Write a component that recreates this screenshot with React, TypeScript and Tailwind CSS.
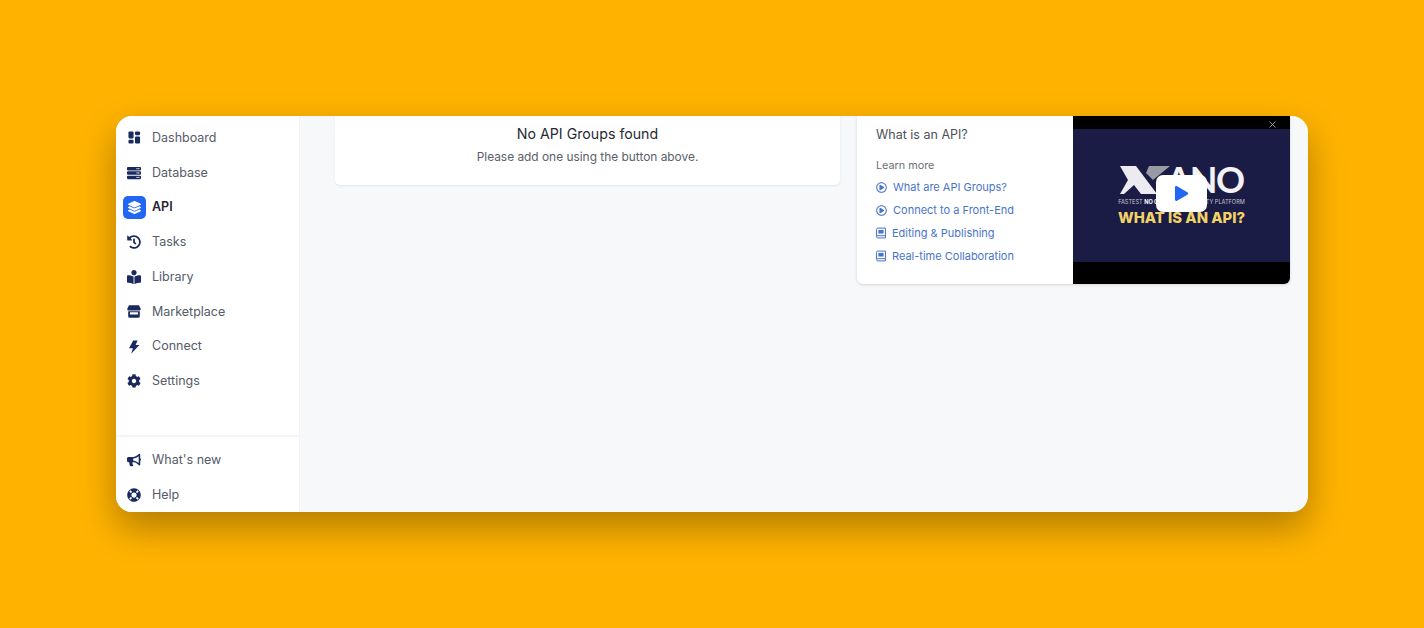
import React from "react";
import { FaServer, FaLayerGroup, FaHistory, FaBookReader, FaCog, FaBullhorn, FaRegPlayCircle, FaPlay, FaLifeRing } from "react-icons/fa";
import { X } from "lucide-react";

function DashIcon() {
  return (
    <svg viewBox="0 0 14 14" className="w-[13px] h-[13px] -mt-[1px]" fill="#1b2a5e">
      <rect x="0.5" y="0.5" width="5.5" height="7.5" rx="1.2" />
      <rect x="0.5" y="9.5" width="5.5" height="4" rx="1.2" />
      <rect x="7.5" y="0.5" width="5.5" height="4" rx="1.2" />
      <rect x="7.5" y="6" width="5.5" height="7.5" rx="1.2" />
    </svg>
  );
}

function BoltIcon() {
  return (
    <svg viewBox="0 0 12 14" className="w-[12px] h-[14px]" fill="#1b2a5e">
      <path d="M5.2 0.4 L9.6 0.4 L7.6 4.9 L11.4 4.9 L3.2 13.8 L4.9 8.2 L1 8.2 Z" />
    </svg>
  );
}

function StoreIcon() {
  return (
    <svg viewBox="0 0 14 13" className="w-[14px] h-[13px] -mt-[1px]" fill="#1b2a5e">
      <path d="M2 0.3 H12 L13.8 4 A1.6 1.6 0 0 1 12.2 5.6 H1.8 A1.6 1.6 0 0 1 0.2 4 Z" />
      <path fillRule="evenodd" d="M1.2 6.2 H12.8 V11.2 A1.6 1.6 0 0 1 11.2 12.8 H2.8 A1.6 1.6 0 0 1 1.2 11.2 Z M3 7.2 V9.6 H11 V7.2 Z" />
    </svg>
  );
}

function BookIcon() {
  return (
    <svg viewBox="0 0 11 12" className="w-[10px] h-[12px] -mt-[1px]" fill="none">
      <path d="M2 0.6 H10.4 V11.4 H2 A1.4 1.4 0 0 1 0.6 10 V2 A1.4 1.4 0 0 1 2 0.6 Z" stroke="currentColor" strokeWidth="1.1" />
      <rect x="2.6" y="2.6" width="5.8" height="4" fill="currentColor" />
      <rect x="0.8" y="8.4" width="9.4" height="1.1" fill="currentColor" />
    </svg>
  );
}

function Item({ icon, label, active }: { icon: React.ReactNode; label: string; active?: boolean }) {
  return (
    <div className="h-[34.75px] flex items-center">
      <div className="w-[36px] flex justify-center text-[#1b2a5e]">
        {active ? (
          <div className="w-[23px] h-[23px] rounded-[5px] bg-[#2167f3] text-white flex items-center justify-center">{icon}</div>
        ) : (
          <div className="flex items-center justify-center">{icon}</div>
        )}
      </div>
      <span className={active ? "text-[12.5px] font-semibold text-[#1f2430]" : "text-[12.5px] text-[#565b68]"}>{label}</span>
    </div>
  );
}

function LinkRow({ icon, label, gap }: { icon: React.ReactNode; label: string; gap: string }) {
  return (
    <div className={`h-[23px] flex items-center text-[#4a74c9] ${gap}`}>
      {icon}
      <span className="text-[11px]">{label}</span>
    </div>
  );
}

export default function App() {
  const font = { fontFamily: "Inter, 'Liberation Sans', sans-serif" };
  return (
    <div className="w-[1424px] h-[628px] bg-[#ffb300] pt-[116px] pl-[116px] overflow-hidden" style={font}>
      <div className="w-[1192px] h-[396px] rounded-[16px] overflow-hidden flex bg-[#f7f8fa] shadow-[0_16px_36px_rgba(0,0,0,0.3)]">
        <aside className="w-[184px] h-full bg-white border-r border-[#f1f2f5] flex flex-col">
          <nav className="pt-[4.8px] flex-1">
            <Item icon={<DashIcon />} label="Dashboard" />
            <Item icon={<FaServer size={14} />} label="Database" />
            <Item active icon={<FaLayerGroup size={13} />} label="API" />
            <Item icon={<FaHistory size={14} />} label="Tasks" />
            <Item icon={<FaBookReader size={14} />} label="Library" />
            <Item icon={<StoreIcon />} label="Marketplace" />
            <Item icon={<BoltIcon />} label="Connect" />
            <Item icon={<FaCog size={14} />} label="Settings" />
          </nav>
          <div className="border-t-2 border-[#f3f4f7] h-[77px] pt-[6px]">
            <Item icon={<FaBullhorn size={14} />} label="What's new" />
            <Item icon={<FaLifeRing size={14} />} label="Help" />
          </div>
        </aside>
        <main className="flex-1 flex items-start pl-[35px]">
          <section className="w-[505px] h-[69px] bg-white rounded-b-[5px] shadow-[0_1px_2px_rgba(0,0,0,0.08)] flex flex-col items-center pt-[8px]">
            <h2 className="text-[14.2px] leading-[20px] font-normal text-[#262a33]">No API Groups found</h2>
            <p className="mt-[4px] text-[11.9px] leading-[18px] text-[#5b606b]">Please add one using the button above.</p>
          </section>
          <section className="ml-[17px] w-[433px] h-[168px] bg-white rounded-b-[6px] shadow-[0_1px_3px_rgba(0,0,0,0.14)] flex overflow-hidden">
            <div className="w-[216px] pl-[19px] pt-[10px]">
              <h3 className="text-[12.5px] leading-[18px] text-[#4c5058]">What is an API?</h3>
              <p className="mt-[14px] mb-[2px] text-[10.8px] leading-[16px] text-[#6a6e76]">Learn more</p>
              <LinkRow gap="gap-[6px]" icon={<FaRegPlayCircle size={11} />} label="What are API Groups?" />
              <LinkRow gap="gap-[6px]" icon={<FaRegPlayCircle size={11} />} label="Connect to a Front-End" />
              <LinkRow gap="gap-[6px]" icon={<BookIcon />} label="Editing & Publishing" />
              <LinkRow gap="gap-[6px]" icon={<BookIcon />} label="Real-time Collaboration" />
            </div>
            <div className="relative w-[217px] h-full bg-black flex flex-col">
              <div className="h-[13px] shrink-0" />
              <div className="h-[133px] shrink-0 bg-[#1b1c45] flex flex-col items-center pt-[36px]">
                <div className="flex items-center h-[29px] ml-[1px]">
                  <svg viewBox="0 0 50 28" className="w-[50px] h-[28px]">
                    <polygon points="0,0 16,0 37,28 21,28 14,19 4,28 0,28 8,14" fill="#ececf0" />
                    <polygon points="29,0 50,0 33,14 26,7" fill="#9a9aa5" />
                  </svg>
                  <span className="text-[#f2f2f5] text-[36px] leading-[29px] font-bold tracking-[-1.5px] -ml-[4px]" style={{ fontFamily: "Lato, sans-serif" }}>ANO</span>
                </div>
                <div className="text-[5.6px] leading-[8px] mt-[4px] text-[#c6c6d2] whitespace-nowrap">FASTEST <b className="text-white">NO CODE</b> PRODUCTIVITY PLATFORM</div>
                <div className="text-[14.8px] leading-[18px] mt-[3px] font-extrabold text-[#f1d267] whitespace-nowrap">WHAT IS AN API?</div>
              </div>
              <X size={11} strokeWidth={1.5} className="absolute top-[3px] right-[12px] text-[#d8d8d8]" />
              <div className="absolute left-[83px] top-[59px] w-[51px] h-[37px] bg-white rounded-[7px] flex items-center justify-center">
                <FaPlay size={15} className="text-[#2167f3]" />
              </div>
            </div>
          </section>
        </main>
      </div>
    </div>
  );
}
